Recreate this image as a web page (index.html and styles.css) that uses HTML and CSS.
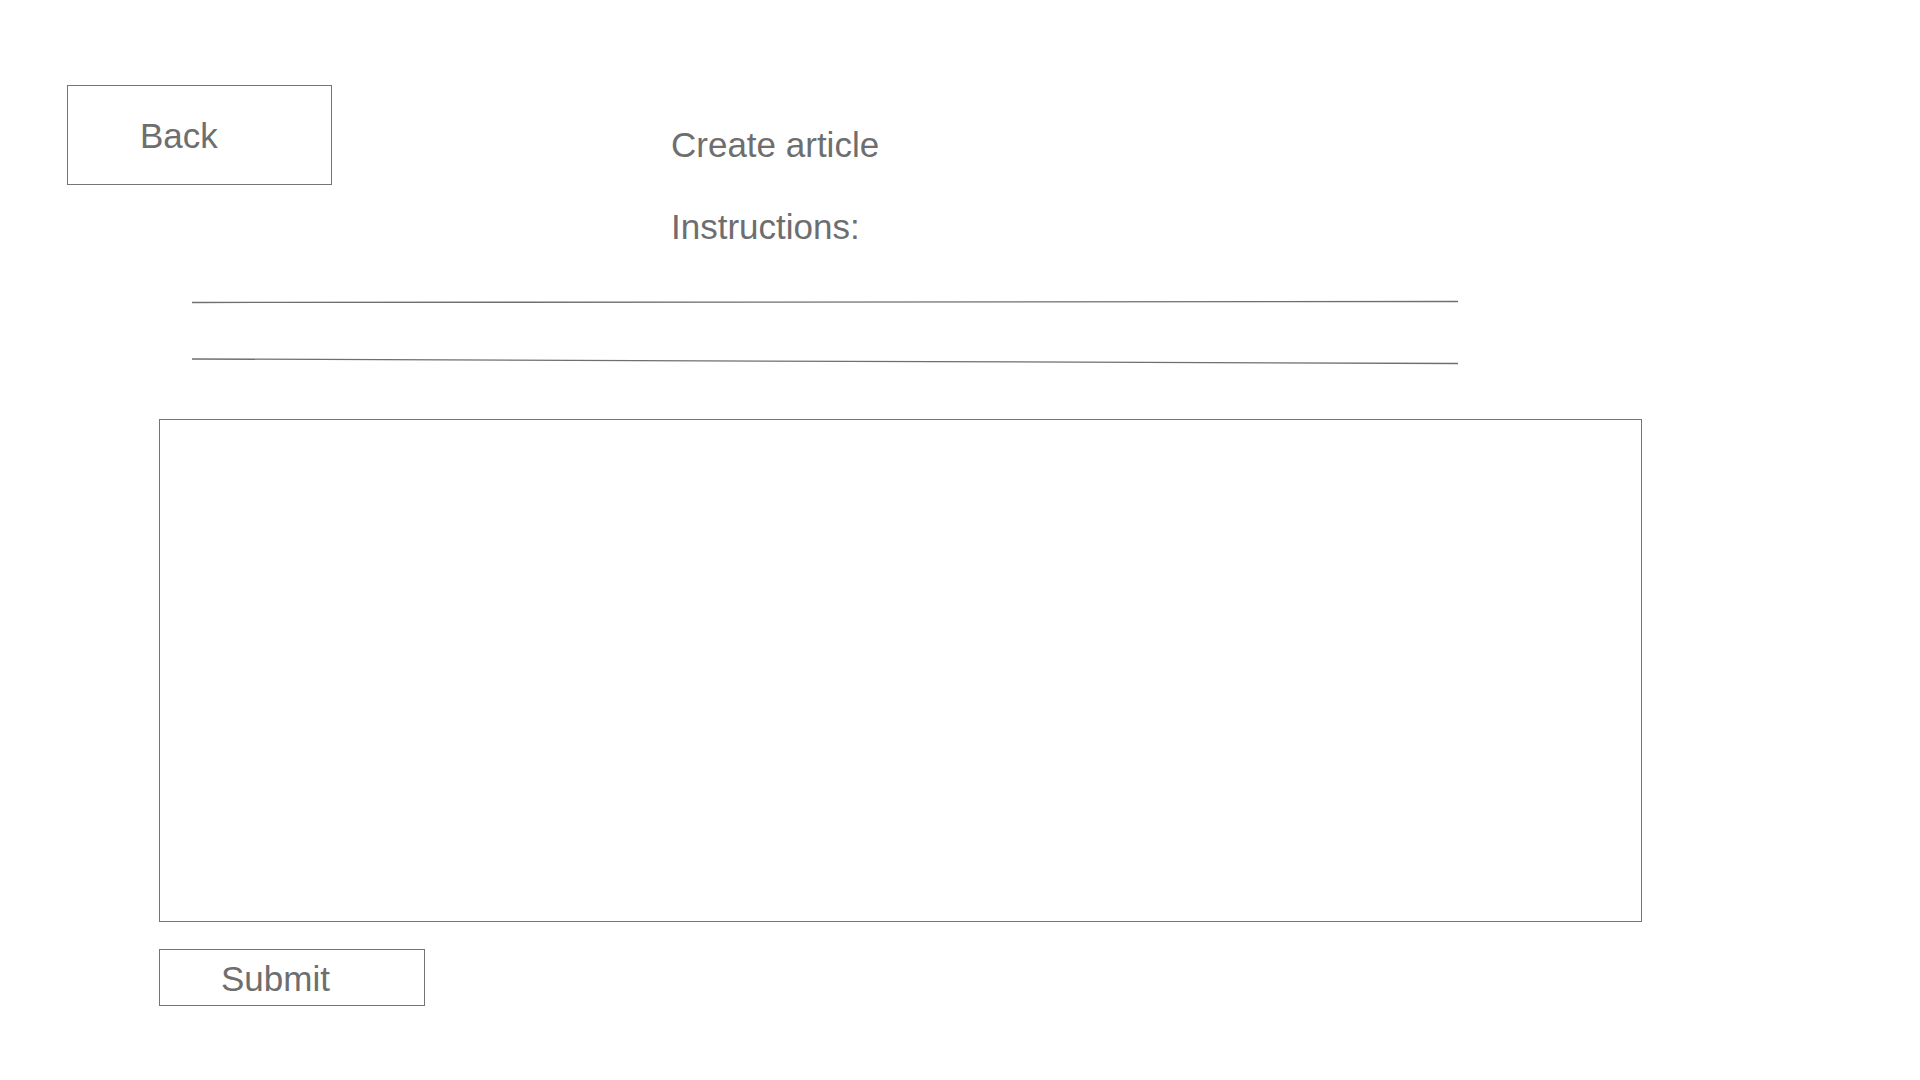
FILE: index.html
```html
<!DOCTYPE html>
<html lang="en">
<head>
<meta charset="utf-8">
<title>Create article</title>
<link rel="stylesheet" href="styles.css">
</head>
<body>
<div class="page">
  <header class="header">
    <button class="btn btn-back" type="button">Back</button>
    <div class="titles">
      <div class="title">Create article</div>
      <div class="subtitle">Instructions:</div>
    </div>
  </header>
  <svg class="rules" width="1268" height="66" viewBox="0 0 1268 66" aria-hidden="true">
    <line x1="0" y1="2.5" x2="1266" y2="1.5" stroke="#6f6f6f" stroke-width="1.3"/>
    <line x1="0" y1="59" x2="1266" y2="63.5" stroke="#6f6f6f" stroke-width="1.3"/>
  </svg>
  <textarea class="editor" aria-label="Article"></textarea>
  <button class="btn btn-submit" type="button">Submit</button>
</div>
</body>
</html>
```
FILE: styles.css
```css
html, body {
  margin: 0;
  padding: 0;
  background: #ffffff;
}

.page {
  width: 1920px;
  height: 1080px;
  padding-top: 85px;
  box-sizing: border-box;
  font-family: "Liberation Sans", Arial, sans-serif;
  color: #6e6e6e;
  overflow: hidden;
}

.header {
  display: flex;
  align-items: flex-start;
  margin-left: 67px;
}

.btn {
  box-sizing: border-box;
  background: #ffffff;
  border: 1px solid #757575;
  border-radius: 0;
  font-family: "Liberation Sans", Arial, sans-serif;
  font-size: 35px;
  line-height: 40px;
  color: #6e6e6e;
  text-align: left;
  margin: 0;
  cursor: pointer;
  display: flex;
  align-items: flex-start;
}

.btn-back {
  width: 265px;
  height: 100px;
  padding: 30px 0 0 72px;
}

.titles {
  margin-left: 339px;
  padding-top: 40px;
  display: flex;
  flex-direction: column;
  gap: 42px;
}

.title,
.subtitle {
  font-size: 35px;
  line-height: 40px;
}

.rules {
  display: block;
  margin-top: 53px;
  margin-left: 192px;
}

.editor {
  display: block;
  box-sizing: border-box;
  width: 1483px;
  height: 503px;
  margin: 53px 0 0 159px;
  border: 1px solid #757575;
  border-radius: 0;
  resize: none;
  outline: none;
  padding: 0;
  background: #ffffff;
}

.btn-submit {
  width: 266px;
  height: 57px;
  margin: 27px 0 0 159px;
  padding: 9px 0 0 61px;
}
```
